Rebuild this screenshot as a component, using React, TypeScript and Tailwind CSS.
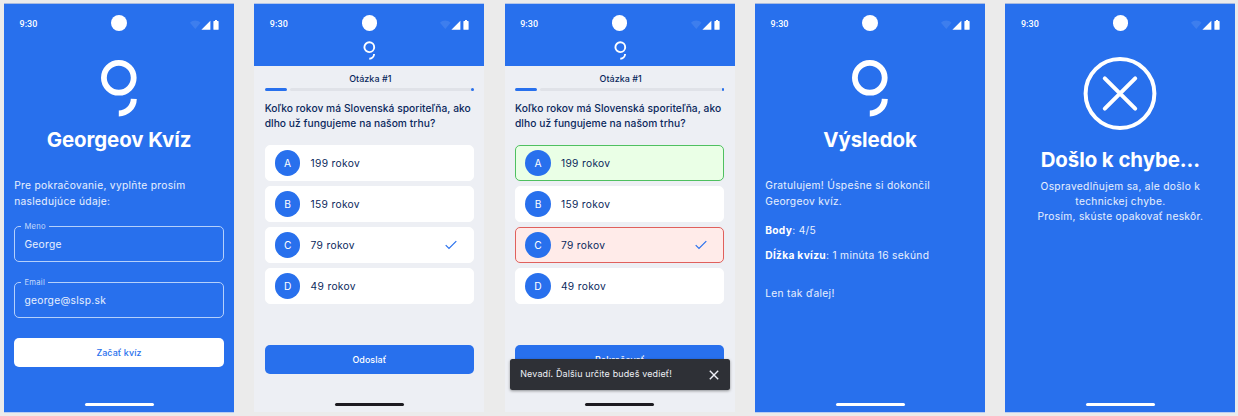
import type { ReactNode } from "react";
import clsx from "clsx";

function StatusBar() {
  return (
    <div className="flex h-[34px] shrink-0 items-start justify-between pl-[15.5px] pr-[14px] text-white">
      <span className="mt-[14.5px] w-[50px] font-['Roboto'] text-[8.95px] font-medium leading-[11px] tracking-[0.09px]">
        9:30
      </span>
      <span className="mt-[11px] mr-[1.5px] size-[15.6px] rounded-full bg-white" />
      <span className="mt-[16px] flex w-[50px] justify-end">
        <svg width="30" height="11" viewBox="0 0 30 11" fill="currentColor">
          <path d="M0 2.7C3-.1 7.5-.1 10.5 2.7L5.25 9Z" opacity=".1" />
          <path d="M11.4 9.8 20.4.8V9.8Z" />
          <path d="M25 0h2v.9h1a.6.6 0 0 1 .6.6v7.7a.6.6 0 0 1-.6.6h-4a.6.6 0 0 1-.6-.6V1.5a.6.6 0 0 1 .6-.6h1Z" />
        </svg>
      </span>
    </div>
  );
}

function LogoLarge() {
  return (
    <svg className="mx-auto block shrink-0" width="36" height="57" viewBox="0 0 36 57" fill="none" stroke="#fff">
      <circle cx="17.8" cy="17.8" r="14.9" strokeWidth="5.8" />
      <path d="M32.8 38.8A15 15 0 0 1 17.8 53.4" strokeWidth="6" />
    </svg>
  );
}

function LogoSmall() {
  return (
    <svg className="mx-auto block shrink-0" width="14" height="20" viewBox="0 0 14 20" fill="none" stroke="#fff">
      <circle cx="7.3" cy="6.2" r="4.9" strokeWidth="1.9" />
      <path d="M12.1 13A5 5 0 0 1 7.3 17.8" strokeWidth="1.9" />
    </svg>
  );
}

function Phone({ light = false, children }: { light?: boolean; children: ReactNode }) {
  return (
    <section
      className={clsx(
        "relative flex h-[408px] w-[230px] shrink-0 flex-col",
        light
          ? "bg-[#edeff4] text-[#0a285c] shadow-[0_-1px_0_#b4c6ea]"
          : "bg-[#2870ed] text-white shadow-[0_-1px_0_#a9bbe0,0_1px_0_#b9cdf3]",
      )}
    >
      {children}
      <div
        className={clsx("mx-auto mt-auto mb-[6px] h-[2.6px] w-[69px] shrink-0 rounded-full", light ? "bg-[#1d1b20]" : "bg-white")}
      />
    </section>
  );
}

function Title({ children }: { children: ReactNode }) {
  return (
    <h1 className="text-center text-[20.45px] font-bold leading-[26px] tracking-[-0.08px] whitespace-nowrap">{children}</h1>
  );
}

function Field({ label, value }: { label: string; value: string }) {
  return (
    <fieldset className="h-[39px] rounded-[5px] border border-[#b5d0fb] px-[6.2px]">
      <legend className="px-[3px] text-[7.67px] leading-[8px] tracking-[0.26px] text-[#c6dafb]">{label}</legend>
      <div className="pt-[5px] pl-[3px] text-[10.22px] leading-[16px] tracking-[0.3px] text-white/90">{value}</div>
    </fieldset>
  );
}

const answers = [
  { letter: "A", text: "199 rokov" },
  { letter: "B", text: "159 rokov" },
  { letter: "C", text: "79 rokov" },
  { letter: "D", text: "49 rokov" },
];

function Question({ graded = false, action }: { graded?: boolean; action: string }) {
  return (
    <>
      <header className="h-[61.5px] shrink-0 bg-[#2870ed]">
        <StatusBar />
        <div className="pt-[3px]">
          <LogoSmall />
        </div>
      </header>
      <div className="flex flex-col px-[10.3px]">
        <div className="mt-[6.5px] pl-[2px] text-center text-[8.95px] font-medium leading-[13px] tracking-[0.06px]">Otázka #1</div>
        <div className="mt-[3px] flex h-[3px] gap-[2.6px]">
          <span className="w-[22.5px] rounded-full bg-[#2870ed]" />
          <span className="flex flex-1 justify-end rounded-full bg-[#e0e2e8]">
            <span className="w-[2.6px] rounded-full bg-[#2870ed]" />
          </span>
        </div>
        <p className="mt-[9.9px] text-[10.22px] font-medium leading-[15.33px] tracking-[0.055px] whitespace-nowrap">
          Koľko rokov má Slovenská sporiteľňa, ako
          <br />
          dlho už fungujeme na našom trhu?
        </p>
        <div className="mt-[13.6px] flex flex-col gap-[5.1px]">
          {answers.map(({ letter, text }) => (
            <div
              key={letter}
              className={clsx(
                "flex h-[35.8px] items-center rounded-[5px] border pr-[16px] pl-[9.2px]",
                graded && letter === "A" && "border-[#4fc060] bg-[#eaffe6]",
                graded && letter === "C" && "border-[#e0605c] bg-[#ffebe9]",
                !(graded && (letter === "A" || letter === "C")) && "border-white bg-white",
              )}
            >
              <span className="flex size-[25.6px] items-center justify-center rounded-full bg-[#2870ed] pt-px text-[10.22px] text-white">
                {letter}
              </span>
              <span className="ml-[10.2px] flex-1 pt-px text-[10.22px] tracking-[0.32px]">{text}</span>
              {letter === "C" && (
                <svg width="12" height="10" viewBox="0 0 12 10" fill="none" stroke="#2870ed" strokeWidth="1.2">
                  <path d="M.7 5.1 4 8.4 11.3 1.1" />
                </svg>
              )}
            </div>
          ))}
        </div>
        <button className="mt-[41.2px] h-[29.4px] rounded-[5px] bg-[#2870ed] text-[8.95px] font-medium tracking-[0.06px] text-white">
          {action}
        </button>
      </div>
    </>
  );
}

function Snackbar() {
  return (
    <div className="absolute top-[355.4px] left-[5px] flex h-[30.7px] w-[220px] items-center justify-between rounded-[2.5px] bg-[#2e3036] pr-[10.5px] pl-[10.5px] text-[8.95px] tracking-[0.15px] text-[#eff0f7] shadow-[0_1px_3px_rgba(0,0,0,0.4)]">
      <span className="-mt-[1.5px]">Nevadí. Ďalšiu určite budeš vedieť!</span>
      <svg width="10" height="10" viewBox="0 0 10 10" fill="none" stroke="currentColor" strokeWidth="1.4">
        <path d="M.8.8 9.2 9.2M9.2.8.8 9.2" />
      </svg>
    </div>
  );
}

const bodyText = "text-[10.22px] leading-[15.33px] tracking-[0.31px] text-white/90";

export default function App() {
  return (
    <main className="flex h-[416px] w-[1238px] gap-[20.35px] overflow-hidden bg-[#ebebeb] pt-[4px] pl-[4px] font-['Inter',sans-serif]">
      <Phone>
        <StatusBar />
        <div className="pt-[21.5px]">
          <LogoLarge />
        </div>
        <div className="mt-[10.5px]">
          <Title>Georgeov Kvíz</Title>
        </div>
        <div className="flex flex-col px-[10.2px] pt-[25.4px]">
          <p className={bodyText}>
            Pre pokračovanie, vyplňte prosím
            <br />
            nasledujúce údaje:
          </p>
          <div className="mt-[13.5px] flex flex-col gap-[17px]">
            <Field label="Meno" value="George" />
            <Field label="Email" value="george@slsp.sk" />
          </div>
          <button className="mt-[20.4px] h-[29.4px] rounded-[5px] bg-white text-[8.95px] font-medium tracking-[0.06px] text-[#2870ed]">
            Začať kvíz
          </button>
        </div>
      </Phone>

      <Phone light>
        <Question action="Odoslať" />
      </Phone>

      <Phone light>
        <Question graded action="Pokračovať" />
        <Snackbar />
      </Phone>

      <Phone>
        <StatusBar />
        <div className="pt-[21.5px]">
          <LogoLarge />
        </div>
        <div className="mt-[10.5px]">
          <Title>Výsledok</Title>
        </div>
        <div className={clsx("px-[10.2px] pt-[25.4px]", bodyText)}>
          <p>
            Gratulujem! Úspešne si dokončil
            <br />
            Georgeov kvíz.
          </p>
          <p className="mt-[14px]">
            <b className="text-white">Body</b>: 4/5
          </p>
          <p className="mt-[9.8px]">
            <b className="text-white">Dĺžka kvízu</b>: 1 minúta 16 sekúnd
          </p>
          <p className="mt-[22px]">Len tak ďalej!</p>
        </div>
      </Phone>

      <Phone>
        <StatusBar />
        <svg className="mx-auto mt-[19px] block shrink-0" width="74" height="74" viewBox="0 0 74 74" fill="none" stroke="#fff" strokeWidth="4">
          <circle cx="37" cy="36.5" r="34.4" />
          <path d="M21.8 21.3 52.2 51.7M52.2 21.3 21.8 51.7" strokeLinecap="round" />
        </svg>
        <div className="mt-[15.5px]">
          <Title>Došlo k chybe...</Title>
        </div>
        <p className={clsx("mt-[6.2px] text-center", bodyText)}>
          Ospravedlňujem sa, ale došlo k
          <br />
          technickej chybe.
          <br />
          Prosím, skúste opakovať neskôr.
        </p>
      </Phone>
    </main>
  );
}
